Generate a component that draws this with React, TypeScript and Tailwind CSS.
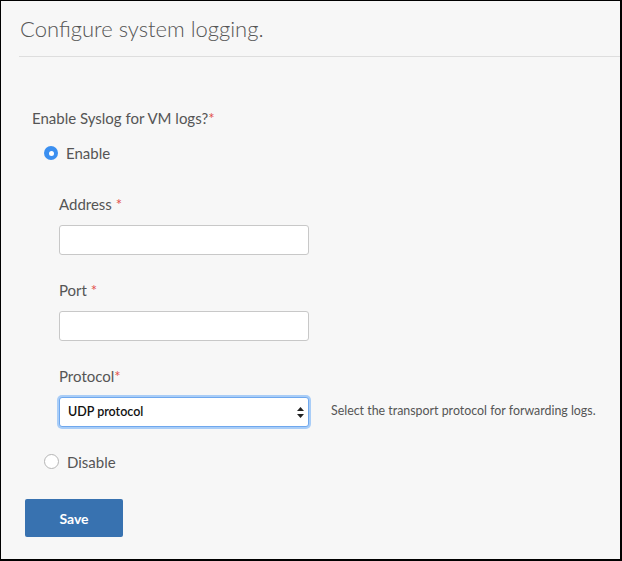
import React, { useState } from 'react';

const font = { fontFamily: 'Lato, "Open Sans", sans-serif' };

const Req = () => <span className="text-[#e2504a]">*</span>;

const Radio = ({ checked, label, onClick }: { checked: boolean; label: string; onClick: () => void }) => (
  <label className="flex items-center gap-[8px] cursor-pointer" onClick={onClick}>
    {checked ? (
      <span className="w-[14px] h-[14px] rounded-full bg-[#3b8ff0] flex items-center justify-center">
        <span className="w-[5px] h-[5px] rounded-full bg-white"></span>
      </span>
    ) : (
      <span className="w-[15px] h-[15px] rounded-full border border-[#b5b5b5] bg-white"></span>
    )}
    <span className="text-[15px] text-[#555]">{label}</span>
  </label>
);

export default function App() {
  const [enabled, setEnabled] = useState(true);

  return (
    <div
      className="w-[622px] h-[561px] bg-[#f7f7f7] border-l border-t border-r-2 border-b-2 border-black overflow-hidden"
      style={font}
    >
      <div className="pl-[18px]">
        <h1 className="text-[22px] font-light text-[#555] pt-[13px] pb-[12px] pl-[1px] leading-[30px]">
          Configure system logging.
        </h1>
        <div className="h-px bg-[#dedede]"></div>
      </div>

      <div className="pl-[31px] pt-[51px]">
        <div className="text-[15px] text-[#555] leading-[20px]">
          Enable Syslog for VM logs?<Req />
        </div>

        <div className="pl-[12px] pt-[14px]">
          <Radio checked={enabled} label="Enable" onClick={() => setEnabled(true)} />

          <div className="pl-[15px] pt-[29px] flex flex-col">
            <div className="text-[15px] text-[#555] leading-[20px]">
              Address <Req />
            </div>
            <input className="mt-[11px] w-[250px] h-[30px] bg-white border border-[#c8c8c8] rounded-[3px] outline-none px-2 text-[13px]" />

            <div className="text-[15px] text-[#555] leading-[20px] mt-[25px]">
              Port <Req />
            </div>
            <input className="mt-[11px] w-[250px] h-[30px] bg-white border border-[#c8c8c8] rounded-[3px] outline-none px-2 text-[13px]" />

            <div className="text-[15px] text-[#555] leading-[20px] mt-[25px]">
              Protocol<Req />
            </div>
            <div className="mt-[11px] flex items-center">
              <div className="relative w-[250px] h-[30px] bg-white border border-[#6fa8ee] rounded-[3px] shadow-[0_0_0_2px_#a9cdf7]">
                <select className="w-full h-full appearance-none bg-transparent outline-none pl-[8px] text-[12.5px] font-semibold text-[#111]">
                  <option>UDP protocol</option>
                  <option>TCP protocol</option>
                </select>
                <svg className="absolute right-[4px] top-[9px] pointer-events-none" width="7" height="11" viewBox="0 0 7 11">
                  <path d="M3.5 0 L7 4 L0 4 Z" fill="#222" />
                  <path d="M3.5 11 L7 7 L0 7 Z" fill="#222" />
                </svg>
              </div>
              <span className="ml-[22px] text-[12.4px] text-[#555]">Select the transport protocol for forwarding logs.</span>
            </div>
          </div>

          <div className="pt-[24px]">
            <Radio checked={!enabled} label="Disable" onClick={() => setEnabled(false)} />
          </div>
        </div>

        <button className="mt-[26px] -ml-[7px] w-[98px] h-[38px] bg-[#3872b0] text-white text-[14px] font-bold rounded-[2px]">
          Save
        </button>
      </div>
    </div>
  );
}
